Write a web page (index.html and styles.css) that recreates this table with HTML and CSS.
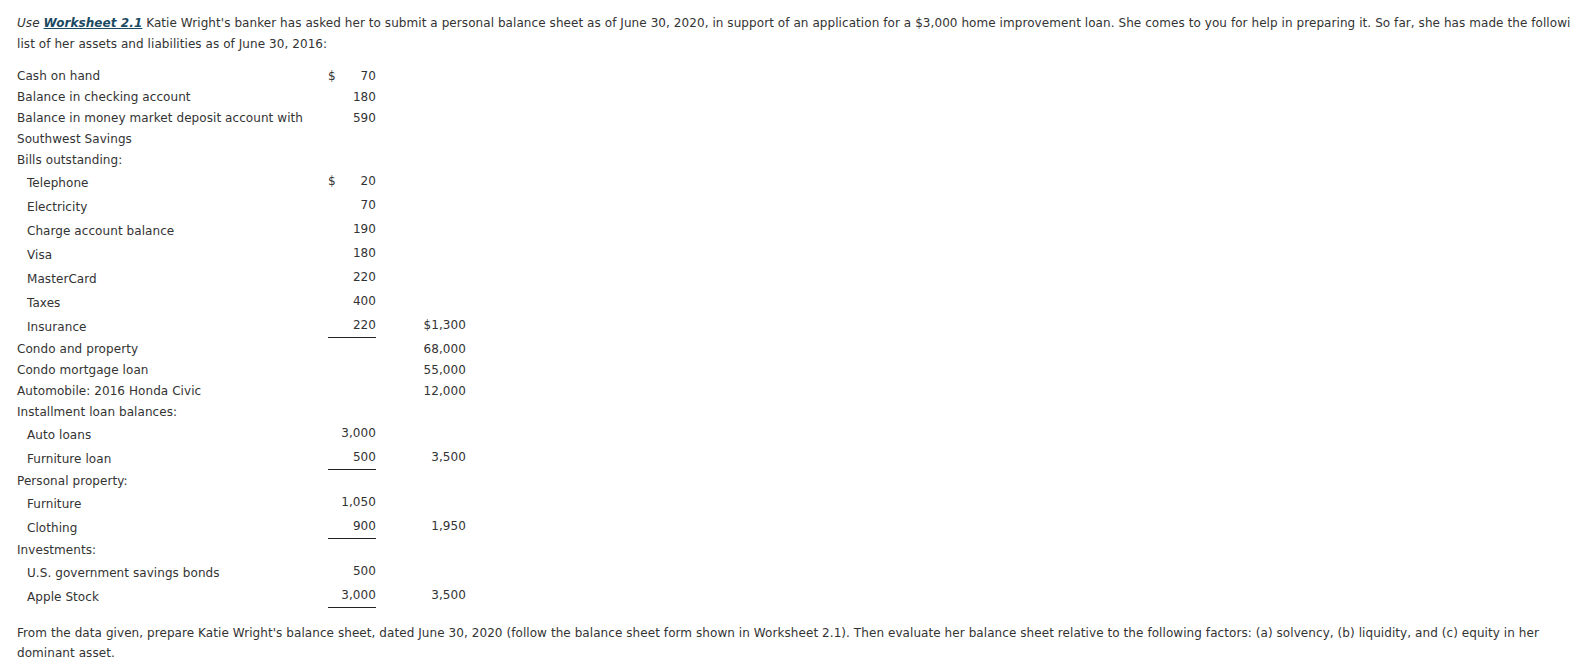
FILE: index.html
```html
<!DOCTYPE html>
<html>
<head>
<meta charset="utf-8">
<link rel="stylesheet" href="styles.css">
</head>
<body>
<div class="page">
  <p class="intro"><em>Use</em> <a class="ws">Worksheet 2.1</a> Katie Wright's banker has asked her to submit a personal balance sheet as of June 30, 2020, in support of an application for a $3,000 home improvement loan. She comes to you for help in preparing it. So far, she has made the following list of her assets and liabilities as of June 30, 2016:</p>

  <div class="sheet">
    <div class="row"><span class="lbl">Cash on hand</span><span class="c1"><span class="dol">$</span>70</span><span class="c2"></span></div>
    <div class="row"><span class="lbl">Balance in checking account</span><span class="c1">180</span><span class="c2"></span></div>
    <div class="row"><span class="lbl">Balance in money market deposit account with</span><span class="c1">590</span><span class="c2"></span></div>
    <div class="row"><span class="lbl">Southwest Savings</span><span class="c1"></span><span class="c2"></span></div>
    <div class="row"><span class="lbl">Bills outstanding:</span><span class="c1"></span><span class="c2"></span></div>
    <div class="row sub"><span class="lbl">Telephone</span><span class="c1"><span class="dol">$</span>20</span><span class="c2"></span></div>
    <div class="row sub"><span class="lbl">Electricity</span><span class="c1">70</span><span class="c2"></span></div>
    <div class="row sub"><span class="lbl">Charge account balance</span><span class="c1">190</span><span class="c2"></span></div>
    <div class="row sub"><span class="lbl">Visa</span><span class="c1">180</span><span class="c2"></span></div>
    <div class="row sub"><span class="lbl">MasterCard</span><span class="c1">220</span><span class="c2"></span></div>
    <div class="row sub"><span class="lbl">Taxes</span><span class="c1">400</span><span class="c2"></span></div>
    <div class="row sub"><span class="lbl">Insurance</span><span class="c1 ul">220</span><span class="c2">$1,300</span></div>
    <div class="row"><span class="lbl">Condo and property</span><span class="c1"></span><span class="c2">68,000</span></div>
    <div class="row"><span class="lbl">Condo mortgage loan</span><span class="c1"></span><span class="c2">55,000</span></div>
    <div class="row"><span class="lbl">Automobile: 2016 Honda Civic</span><span class="c1"></span><span class="c2">12,000</span></div>
    <div class="row"><span class="lbl">Installment loan balances:</span><span class="c1"></span><span class="c2"></span></div>
    <div class="row sub"><span class="lbl">Auto loans</span><span class="c1">3,000</span><span class="c2"></span></div>
    <div class="row sub"><span class="lbl">Furniture loan</span><span class="c1 ul">500</span><span class="c2">3,500</span></div>
    <div class="row"><span class="lbl">Personal property:</span><span class="c1"></span><span class="c2"></span></div>
    <div class="row sub"><span class="lbl">Furniture</span><span class="c1">1,050</span><span class="c2"></span></div>
    <div class="row sub"><span class="lbl">Clothing</span><span class="c1 ul">900</span><span class="c2">1,950</span></div>
    <div class="row"><span class="lbl">Investments:</span><span class="c1"></span><span class="c2"></span></div>
    <div class="row sub"><span class="lbl">U.S. government savings bonds</span><span class="c1">500</span><span class="c2"></span></div>
    <div class="row sub"><span class="lbl">Apple Stock</span><span class="c1 ul">3,000</span><span class="c2">3,500</span></div>
  </div>

  <p class="outro">From the data given, prepare Katie Wright's balance sheet, dated June 30, 2020 (follow the balance sheet form shown in Worksheet 2.1). Then evaluate her balance sheet relative to the following factors: (a) solvency, (b) liquidity, and (c) equity in her dominant asset.</p>
</div>
</body>
</html>
```

FILE: styles.css
```css
html, body {
  margin: 0;
  padding: 0;
  background: #fff;
  overflow: hidden;
}
body {
  font-family: "DejaVu Sans", Verdana, sans-serif;
  font-size: 12px;
  color: #333;
  letter-spacing: 0.07px;
}
.page {
  padding: 13px 0 0 17px;
}
.intro {
  margin: 0;
  width: 1585px;
  line-height: 21px;
}
.intro em {
  font-style: italic;
}
.ws {
  font-weight: bold;
  font-style: italic;
  color: #1b4a63;
  text-decoration: underline;
}
.sheet {
  margin-top: 10px;
  display: flex;
  flex-direction: column;
}
.row {
  display: grid;
  grid-template-columns: 311px 48px 90px;
  height: 21px;
  align-items: center;
}
.row.sub {
  height: 24px;
}
.row.sub .lbl {
  padding-left: 10px;
  padding-top: 2px;
}
.c1, .c2 {
  text-align: right;
  position: relative;
  align-self: stretch;
  display: flex;
  align-items: center;
  justify-content: flex-end;
}
.sub .c1, .sub .c2 {
  padding-bottom: 2px;
}
.dol {
  margin-right: auto;
}
.c1.ul::after {
  content: "";
  position: absolute;
  left: 0;
  right: 0;
  bottom: 0;
  border-top: 1px solid #222;
}
.outro {
  margin: 15px 0 0;
  width: 1545px;
  line-height: 20px;
}
```
